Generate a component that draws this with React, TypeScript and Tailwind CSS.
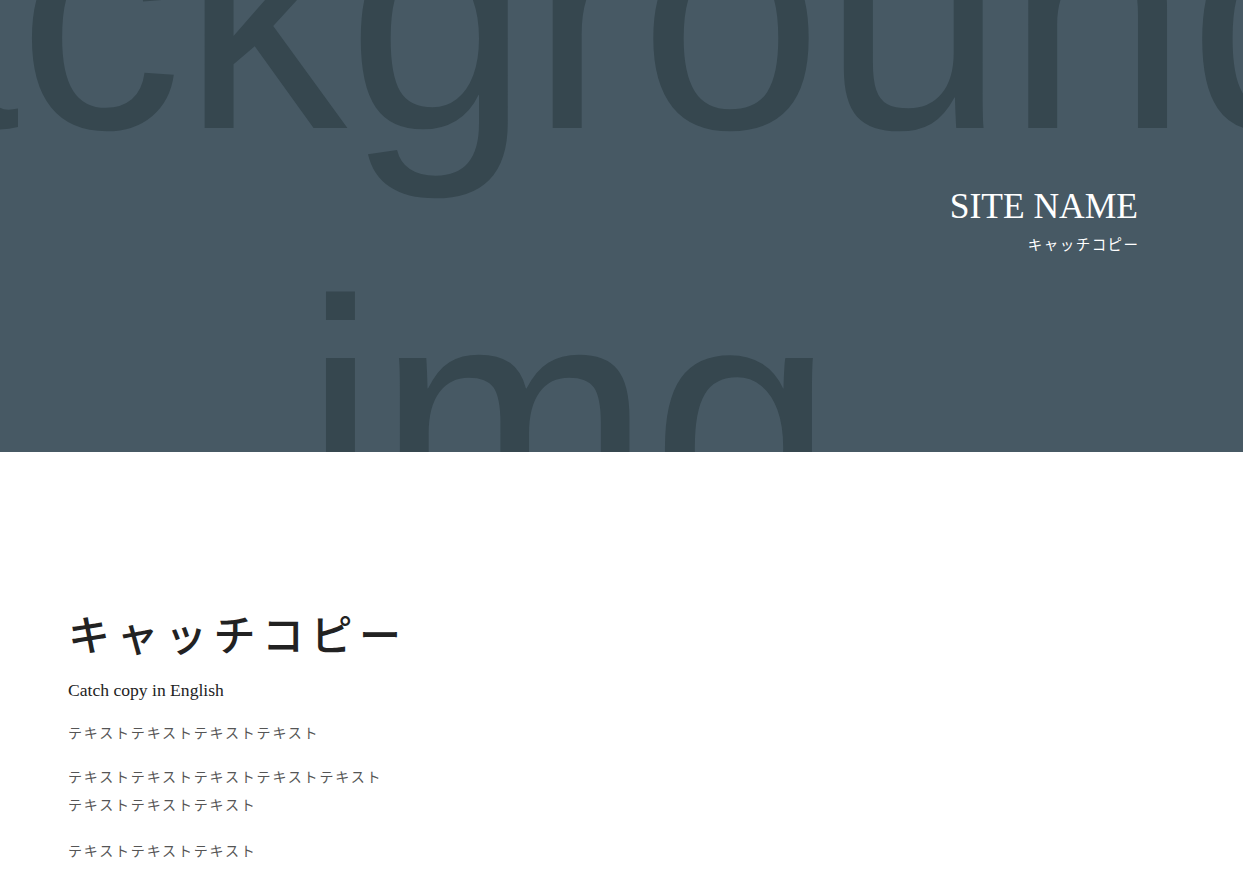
import React from 'react';

const serif = "font-['Liberation_Serif','Noto_Sans_CJK_JP',serif]";

// placeholder photo: big "background img" lettering on slate
const HeroImage: React.FC = () => (
  <svg
    className="absolute inset-0 h-full w-full"
    width="1243"
    height="452"
    viewBox="0 0 1243 452"
    preserveAspectRatio="xMinYMin slice"
    aria-hidden="true"
  >
    <rect width="1243" height="452" fill="#475964" />
    <g
      fill="#36474f"
      fontFamily="'Liberation Sans', Arial, sans-serif"
      fontSize="329"
      transform="scale(1 1.03)"
    >
      <text x="-348" y="124.3">background</text>
      <text x="304" y="521.4">img</text>
    </g>
  </svg>
);

const paragraphs: string[][] = [
  ['テキストテキストテキストテキスト'],
  ['テキストテキストテキストテキストテキスト', 'テキストテキストテキスト'],
  ['テキストテキストテキスト'],
];

const App: React.FC = () => {
  return (
    <div className={`min-h-screen bg-white ${serif}`}>
      {/* hero */}
      <header className="relative h-[452px] overflow-hidden">
        <HeroImage />
        <div className="relative flex flex-col items-end pr-[105px] pt-[185px] text-white">
          <h1 className="text-[35.5px] leading-[42px] font-normal">SITE NAME</h1>
          <p className="mt-[7px] mr-[-1.5px] text-[14.5px] leading-[22px] tracking-[0.1em]">キャッチコピー</p>
        </div>
      </header>

      {/* intro */}
      <main className="px-[68px] pt-[154px] pb-[40px]">
        <h2 className="text-[42px] leading-[62px] font-medium tracking-[0.155em] text-[#222]">キャッチコピー</h2>
        <p className="mt-[9px] text-[17.6px] leading-[26px] text-[#222]">Catch copy in English</p>
        <div className="mt-[17px] text-[14px] leading-[28px] tracking-[0.13em] text-[#555]">
          {paragraphs.map((lines, i) => (
            <p key={i} className={i === 0 ? '' : i === 1 ? 'mt-4' : 'mt-[18px]'}>
              {lines.map((line, j) => (
                <React.Fragment key={j}>
                  {j > 0 && <br />}
                  {line}
                </React.Fragment>
              ))}
            </p>
          ))}
        </div>
      </main>
    </div>
  );
};

export default App;
